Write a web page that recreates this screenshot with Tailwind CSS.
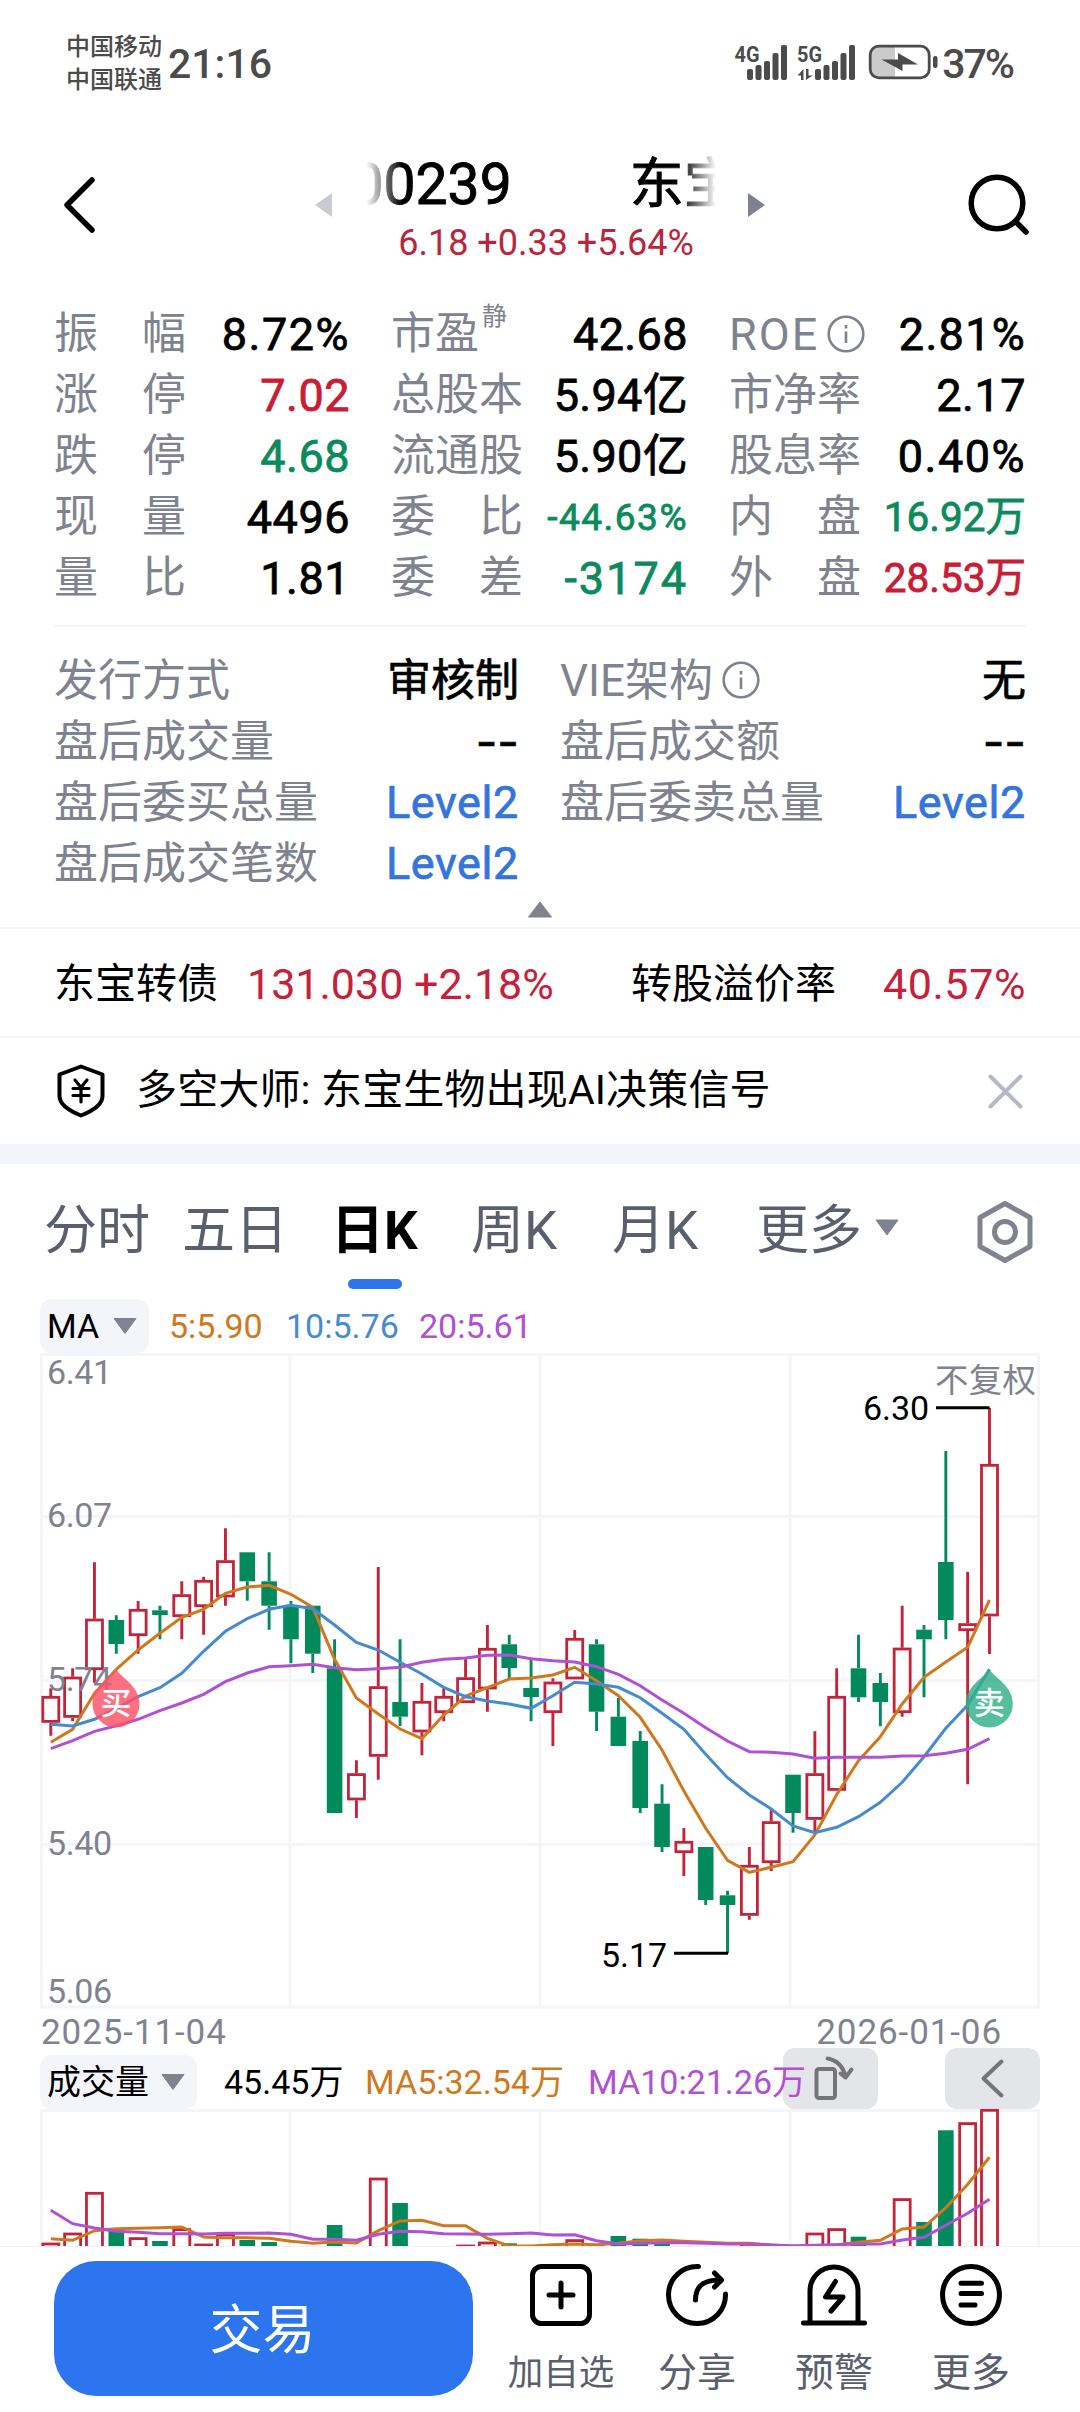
<!DOCTYPE html>
<html lang="zh-CN">
<head>
<meta charset="utf-8">
<title>东宝生物</title>
<script src="https://cdn.jsdelivr.net/npm/@tailwindcss/browser@4"></script>
</head>
<body class="w-[1080px] h-[2412px] overflow-hidden bg-white text-black font-['Roboto','Noto_Sans_CJK_SC',sans-serif] flex flex-col">

<!-- status bar -->
<header class="h-[130px] shrink-0 flex items-start justify-between pl-[66px] pr-[67px] text-[#4b4b4b] font-medium whitespace-nowrap">
  <div class="flex">
    <div class="pt-[31px] text-[24px] leading-[33px] w-[102px]"><div>中国移动</div><div>中国联通</div></div>
    <div class="pt-[44px] text-[41px] leading-[41px]">21:16</div>
  </div>
  <div class="flex pt-[40px]">
    <svg class="w-[208px] h-[46px]" viewBox="732 40 208 46" fill="#4b4b4b">
      <text x="734.5" y="62" font-size="22" font-weight="700" textLength="25" lengthAdjust="spacingAndGlyphs">4G</text>
      <rect x="747" y="69" width="6" height="11" rx="2"/><rect x="755.500" y="65" width="6" height="15" rx="2"/><rect x="764" y="61" width="6" height="19" rx="2"/><rect x="772.500" y="53" width="6" height="27" rx="2"/><rect x="781" y="45" width="6" height="35" rx="2"/>
      <text x="797" y="62" font-size="22" font-weight="700" textLength="25" lengthAdjust="spacingAndGlyphs">5G</text>
      <path d="M797.500 75.500L803.500 69V80H801V75.500ZM806 69V80L812.500 75.500H808.500V69Z"/>
      <rect x="815" y="69" width="6" height="11" rx="2"/><rect x="823.500" y="65" width="6" height="15" rx="2"/><rect x="832" y="61" width="6" height="19" rx="2"/><rect x="840.500" y="53" width="6" height="27" rx="2"/><rect x="849" y="45" width="6" height="35" rx="2"/>
      <path d="M895 46H879Q870 46 870 55V69Q870 78 879 78H895Z" fill="#cbcbcb"/>
      <rect x="870.200" y="46.200" width="59" height="31.600" rx="8.500" fill="none" stroke="#4b4b4b" stroke-width="2.800"/>
      <path d="M898 53L918 64.500H902.500V71L881.500 59.500H898Z"/><rect x="933" y="56" width="4.500" height="12" rx="2.200"/>
    </svg>
    <div class="pt-[4px] pl-[2px] text-[41px] leading-[41px] tracking-[-2px]">37%</div>
  </div>
</header>

<!-- title bar -->
<section class="h-[172px] shrink-0 flex px-[54px]">
  <svg class="w-[60px] h-[140px]" viewBox="54 130 60 140" fill="none" stroke="#000" stroke-width="5.500" stroke-linecap="round" stroke-linejoin="round"><path d="M92 180L67 205L92 230"/></svg>
  <div class="flex ml-[197px]">
    <svg class="w-[26px] h-[140px]" viewBox="311 130 26 140"><path d="M315 205L332 193V217Z" fill="#c9cbd3"/></svg>
    <div class="w-[407px] flex flex-col items-center whitespace-nowrap">
      <div class="relative h-[92px] w-[350px] overflow-hidden text-[57px] leading-[57px] pt-[26px] flex [-webkit-text-stroke:0.9px]">
        <span class="-ml-[14px]">00239</span>
        <span class="ml-[118px] text-[54px]">东宝</span>
        <span class="absolute left-0 top-0 w-[36px] h-[92px] bg-linear-to-r from-white to-white/0"></span>
        <span class="absolute right-0 top-0 w-[36px] h-[92px] bg-linear-to-l from-white to-white/0"></span>
      </div>
      <div class="text-[36px] leading-[44px] -mt-px text-[#b9253c] pl-[11px]">6.18 +0.33 +5.64%</div>
    </div>
    <svg class="w-[26px] h-[140px]" viewBox="744 130 26 140"><path d="M765 205L748 193V217Z" fill="#7d8190"/></svg>
  </div>
  <svg class="w-[70px] h-[140px] ml-auto" viewBox="956 130 70 140" fill="none" stroke="#000" stroke-width="5.500" stroke-linecap="round" overflow="visible"><circle cx="997" cy="203" r="25.800"/><path d="M1016 222L1026 232"/></svg>
</section>

<!-- key figures -->
<section class="shrink-0 h-[325px] px-[54px]">
  <div class="h-full pt-[2px] grid grid-cols-[296px_297px_297px] grid-rows-[repeat(5,61px)] gap-x-[41px] border-b-[2px] border-[#f5f5f9] text-[45px] leading-[61px] whitespace-nowrap [&>div>span:last-child]:[-webkit-text-stroke:0.8px]">
    <div class="flex justify-between"><span class="w-[132px] flex justify-between text-[44px] text-[#7f838f]"><i class="not-italic">振</i><i class="not-italic">幅</i></span><span class="tracking-[1.5px]">8.72%</span></div>
    <div class="flex justify-between"><span class="text-[44px] text-[#7f838f] flex">市盈<span class="text-[25px] leading-[26px] pl-[3px]">静</span></span><span class="tracking-[0.4px]">42.68</span></div>
    <div class="flex justify-between"><span class="text-[45px] text-[#7f838f] flex items-center tracking-[2px]">ROE<svg class="w-[40px] h-[40px] ml-[7px] -mt-[2px]" viewBox="0 0 40 40" fill="none" stroke="#7f838f" stroke-width="2.600"><circle cx="20" cy="20" r="17.300"/><path d="M20 17.500V29M20 11V14.500"/></svg></span><span class="tracking-[1.3px]">2.81%</span></div>

    <div class="flex justify-between"><span class="w-[132px] flex justify-between text-[44px] text-[#7f838f]"><i class="not-italic">涨</i><i class="not-italic">停</i></span><span class="text-[#c91c35] tracking-[0.5px]">7.02</span></div>
    <div class="flex justify-between"><span class="text-[44px] text-[#7f838f]">总股本</span><span class="tracking-[0.3px]">5.94亿</span></div>
    <div class="flex justify-between"><span class="text-[44px] text-[#7f838f]">市净率</span><span class="tracking-[0.5px]">2.17</span></div>

    <div class="flex justify-between"><span class="w-[132px] flex justify-between text-[44px] text-[#7f838f]"><i class="not-italic">跌</i><i class="not-italic">停</i></span><span class="text-[#0b8a5c] tracking-[0.5px]">4.68</span></div>
    <div class="flex justify-between"><span class="text-[44px] text-[#7f838f]">流通股</span><span class="tracking-[0.3px]">5.90亿</span></div>
    <div class="flex justify-between"><span class="text-[44px] text-[#7f838f]">股息率</span><span class="tracking-[1.5px]">0.40%</span></div>

    <div class="flex justify-between"><span class="w-[132px] flex justify-between text-[44px] text-[#7f838f]"><i class="not-italic">现</i><i class="not-italic">量</i></span><span class="tracking-[0.5px]">4496</span></div>
    <div class="flex justify-between"><span class="w-[132px] flex justify-between text-[44px] text-[#7f838f]"><i class="not-italic">委</i><i class="not-italic">比</i></span><span class="text-[37px] text-[#0b8a5c] tracking-[1.5px]">-44.63%</span></div>
    <div class="flex justify-between"><span class="w-[132px] flex justify-between text-[44px] text-[#7f838f]"><i class="not-italic">内</i><i class="not-italic">盘</i></span><span class="text-[40.500px] text-[#0b8a5c]">16.92万</span></div>

    <div class="flex justify-between"><span class="w-[132px] flex justify-between text-[44px] text-[#7f838f]"><i class="not-italic">量</i><i class="not-italic">比</i></span><span class="tracking-[0.5px]">1.81</span></div>
    <div class="flex justify-between"><span class="w-[132px] flex justify-between text-[44px] text-[#7f838f]"><i class="not-italic">委</i><i class="not-italic">差</i></span><span class="text-[#0b8a5c] tracking-[2px]">-3174</span></div>
    <div class="flex justify-between"><span class="w-[132px] flex justify-between text-[44px] text-[#7f838f]"><i class="not-italic">外</i><i class="not-italic">盘</i></span><span class="text-[40.500px] text-[#c91c35]">28.53万</span></div>
  </div>
</section>

<!-- after-hours figures -->
<section class="shrink-0 h-[302px] border-b-[2px] border-[#f5f5f9] px-[54px] pt-[24px] flex flex-col items-center">
  <div class="w-full grid grid-cols-[465px_466px] grid-rows-[repeat(4,61px)] gap-x-[41px] text-[44px] leading-[61px] whitespace-nowrap text-[#7f838f] [&>div>span:last-child]:[-webkit-text-stroke:0.7px]">
    <div class="flex justify-between"><span>发行方式</span><span class="text-black">审核制</span></div>
    <div class="flex justify-between"><span class="flex items-center">VIE架构<svg class="w-[40px] h-[40px] ml-[8px] -mt-[3px]" viewBox="0 0 40 40" fill="none" stroke="#7f838f" stroke-width="2.600"><circle cx="20" cy="20" r="17.300"/><path d="M20 17.500V29M20 11V14.500"/></svg></span><span class="text-black">无</span></div>
    <div class="flex justify-between"><span>盘后成交量</span><span class="text-[47px] leading-[59px] text-black font-['Inter']">--</span></div>
    <div class="flex justify-between"><span>盘后成交额</span><span class="text-[47px] leading-[59px] text-black font-['Inter']">--</span></div>
    <div class="flex justify-between"><span>盘后委买总量</span><span class="text-[45px] leading-[59px] tracking-[0.6px] text-[#3375dd]">Level2</span></div>
    <div class="flex justify-between"><span>盘后委卖总量</span><span class="text-[45px] leading-[59px] tracking-[0.6px] text-[#3375dd]">Level2</span></div>
    <div class="flex justify-between"><span>盘后成交笔数</span><span class="text-[45px] leading-[59px] tracking-[0.6px] text-[#3375dd]">Level2</span></div>
  </div>
  <svg class="w-[26px] h-[18px] mt-[6px]" viewBox="0 0 26 18"><path d="M13 1L24.500 16H1.500Z" fill="#7f838f" stroke="#7f838f" stroke-linejoin="round"/></svg>
</section>

<!-- convertible bond -->
<section class="shrink-0 h-[109px] border-b-[2px] border-[#f4f5f9] px-[54px] pt-[2px] flex items-center text-[41px] leading-[60px] whitespace-nowrap">
  <span class="w-[193px]">东宝转债</span>
  <span class="w-[384px] text-[43px] text-[#c6203a]">131.030 +2.18%</span>
  <span>转股溢价率</span>
  <span class="ml-auto text-[43px] tracking-[0.6px] text-[#c6203a]">40.57%</span>
</section>

<!-- signal notice -->
<section class="shrink-0 h-[126px] px-[54px] flex items-center border-b-[20px] border-[#f4f5fa] whitespace-nowrap">
  <svg class="w-[82px] h-[60px]" viewBox="54 1061 82 60" fill="none" stroke="#000" stroke-width="4" stroke-linejoin="round" stroke-linecap="round"><path d="M81 1066.500L102.500 1074.500V1096Q102.500 1107 81 1115.500Q59.500 1107 59.500 1096V1074.500Z"/><path stroke-width="3.200" d="M75 1080L81 1087.500L87 1080M81 1088V1102M73 1088.500H89M73 1095.500H89"/></svg>
  <span class="text-[41px] leading-[60px] tracking-[0.15px] -mt-[3px]">多空大师: 东宝生物出现AI决策信号</span>
  <svg class="w-[40px] h-[40px] ml-auto" viewBox="986 1071 40 40" stroke="#b4b9c6" stroke-width="4" stroke-linecap="round"><path d="M990.500 1076.500L1020.500 1106.500M1020.500 1076.500L990.500 1106.500"/></svg>
</section>

<!-- period tabs -->
<nav class="shrink-0 h-[133px] pt-px pl-[44px] pr-[42px] flex items-start text-[53px] leading-[132px] text-[#5a5f6e] whitespace-nowrap">
  <span class="w-[138px]">分时</span>
  <span class="w-[149px]">五日</span>
  <span class="w-[140px] font-bold text-black flex flex-col"><span class="h-[114px]">日K</span><span class="ml-[17px] w-[54px] h-[10px] rounded-full bg-[#2c75ef]"></span></span>
  <span class="w-[141px]">周K</span>
  <span class="w-[144px]">月K</span>
  <span>更多</span>
  <svg class="w-[26px] h-[130px] ml-[12px]" viewBox="0 0 26 130"><path d="M2 55H24L13 70Z" fill="#7f838f" stroke="#7f838f" stroke-linejoin="round"/></svg>
  <svg class="w-[66px] h-[130px] ml-auto" viewBox="972.5 1165 66 130" fill="none" stroke="#7f838f" stroke-width="5" stroke-linejoin="round"><path d="M1005.500 1203.500L1030.500 1217.500V1246.500L1005.500 1260.500L980.500 1246.500V1217.500Z"/><circle cx="1005.500" cy="1232" r="10.500"/></svg>
</nav>

<!-- moving-average legend -->
<section class="shrink-0 h-[56px] pt-[2px] pl-[40px] flex text-[34px] leading-[54px] whitespace-nowrap">
  <div class="w-[109px] h-[54px] rounded-[12px] bg-[#f4f5fa] flex items-center pl-[7px]">MA<svg class="w-[26px] h-[18px] ml-[13px]" viewBox="0 0 26 18"><path d="M2 1.500H24L13 16.500Z" fill="#7f838f" stroke="#7f838f" stroke-linejoin="round"/></svg></div>
  <span class="ml-[20px] w-[117px] text-[#d0781e]">5:5.90</span>
  <span class="w-[133px] text-[#468bcd]">10:5.76</span>
  <span class="text-[#b050d2]">20:5.61</span>
</section>

<!-- candlestick chart -->
<svg id="k" class="shrink-0 w-[1080px] h-[656px]" viewBox="0 1353 1080 656" fill="none"></svg>

<!-- dates -->
<section class="shrink-0 h-[39px] pl-[41px] pr-[78px] flex justify-between text-[35px] leading-[48px] tracking-[0.9px] text-[#7f838f] whitespace-nowrap"><span>2025-11-04</span><span>2026-01-06</span></section>

<!-- volume legend -->
<section class="relative shrink-0 h-[61px] pt-[7px] pl-[40px] flex text-[34px] leading-[54px] whitespace-nowrap">
  <div class="w-[157px] h-[54px] rounded-[12px] bg-[#f4f5fa] flex items-center pl-[7px]">成交量<svg class="w-[26px] h-[18px] ml-[11px]" viewBox="0 0 26 18"><path d="M2 1.500H24L13 16.500Z" fill="#7f838f" stroke="#7f838f" stroke-linejoin="round"/></svg></div>
  <div class="absolute left-[783px] top-0 w-[95px] h-[61px] rounded-[12px] bg-[#e4e5e9]"><svg class="w-[95px] h-[61px]" viewBox="783 2048 95 61" fill="none" stroke="#757575" stroke-width="4" stroke-linecap="round" stroke-linejoin="round"><rect x="816.500" y="2069" width="18.500" height="29" rx="2.500"/><path d="M827.500 2058.500Q842 2061 845.500 2077M840.500 2073.500L845.500 2077.500L851.500 2069.500"/></svg></div>
  <div class="absolute left-[945px] top-0 w-[95px] h-[61px] rounded-[12px] bg-[#e4e5e9]"><svg class="w-[95px] h-[61px]" viewBox="945 2048 95 61" fill="none" stroke="#757575" stroke-width="4" stroke-linecap="round" stroke-linejoin="round"><path d="M1001.500 2061.500L983.500 2078.500L1001.500 2095.500"/></svg></div>
  <span class="relative ml-[27px] w-[141px]">45.45万</span>
  <span class="relative w-[223px] text-[#d0781e]">MA5:32.54万</span>
  <span class="relative text-[#b050d2]">MA10:21.26万</span>
</section>

<!-- volume chart -->
<svg id="v" class="shrink-0 w-[1080px] h-[137px]" viewBox="0 2109 1080 137" fill="none"></svg>

<!-- action bar -->
<footer class="shrink-0 h-[166px] border-t border-[#eeeff3] pl-[54px] flex items-start text-[39px] text-[#5a5f6e] whitespace-nowrap">
  <button class="mt-[14px] w-[419px] h-[135px] rounded-[42px] bg-[#2c75ef] text-white text-[53px] leading-[133px] pt-[4px] pr-[2px] flex justify-center">交易</button>
  <div class="w-[136px] ml-[20px] flex flex-col items-center pt-[14px]"><svg class="w-[68px] h-[68px]" viewBox="527 2261 68 68" fill="none" stroke="#000" stroke-width="5" stroke-linecap="round"><rect x="532.500" y="2266.500" width="57" height="57" rx="9"/><path d="M561 2283V2307M549 2295H573"/></svg><span class="mt-[15px] text-[35.500px] leading-[58px]">加自选</span></div>
  <div class="w-[136px] flex flex-col items-center pt-[14px]"><svg class="w-[68px] h-[68px]" viewBox="663 2261 68 68" fill="none" stroke="#000" stroke-width="5" stroke-linecap="round" stroke-linejoin="round"><path d="M698.500 2266.500A28.500 28.500 0 1 0 725.500 2294M695.500 2300C695.500 2286 703 2280 720 2280M714.500 2273L721.500 2280L714.500 2287"/></svg><span class="mt-[15px] leading-[58px]">分享</span></div>
  <div class="w-[138px] flex flex-col items-center pt-[14px]"><svg class="w-[68px] h-[68px]" viewBox="800 2261 68 68" fill="none" stroke="#000" stroke-width="5" stroke-linecap="round" stroke-linejoin="round"><path d="M810 2322V2291A24 24 0 0 1 858 2291V2322M803.500 2323H864.500M835.500 2281.500L825.500 2297H843L831 2311"/></svg><span class="mt-[15px] leading-[58px]">预警</span></div>
  <div class="w-[136px] flex flex-col items-center pt-[14px]"><svg class="w-[68px] h-[68px]" viewBox="937 2261 68 68" fill="none" stroke="#000" stroke-width="5" stroke-linecap="round"><circle cx="971" cy="2295" r="28.500"/><path d="M961 2283.200H981.500M961 2293.500H981.500M961 2305H975"/></svg><span class="mt-[15px] leading-[58px]">更多</span></div>
</footer>

<script>
const RED = '#c3243b', GREEN = '#028a5d', GRID = '#f4f5fa';
const X = i => 50.8 + 21.83 * i;
// up/down flag, high, body top, body bottom, low
const candles = [
 ['r',1688.3,1696,1722.7,1735.7],['r',1668.3,1676.7,1717.7,1721],['r',1562.3,1618.7,1670,1682.7],['g',1615.3,1620,1644,1653.7],['r',1601,1609,1636,1653.7],['g',1605.7,1610.3,1615,1639.3],['r',1581.3,1594.3,1617,1639.3],['r',1576.7,1580,1607,1634.7],['r',1528.3,1560.3,1597.3,1605.7],['g',1552.3,1552.3,1581.3,1600.7],['g',1552.3,1581.3,1605.7,1629.7],['g',1601,1605.7,1639.3,1663.3],['g',1605.7,1605.7,1653.7,1673],['g',1639.3,1668.3,1813,1813],['r',1760.3,1773.3,1800.3,1818],['r',1567,1686.3,1756.7,1779.7],
 ['g',1639.3,1702,1716.7,1726],['r',1683,1701,1732.3,1755.3],['r',1688.3,1696,1713,1721.3],['r',1658.3,1677.3,1703,1703],['r',1625,1648,1689.3,1711.7],['g',1634.7,1644.3,1668,1678.3],['g',1660,1688,1697,1721.3],['r',1678.3,1681.7,1713,1746],['r',1630,1638,1679.3,1679.3],['g',1639.3,1644.3,1711.7,1731],['g',1698,1716.7,1746,1746],['g',1731,1741,1808,1813],['g',1784.3,1803.7,1847,1852],['r',1828,1841,1853,1876],['g',1847,1847,1900,1905],['g',1890.7,1895.3,1905,1953.3],
 ['r',1847,1865,1915.7,1919.7],['r',1808.3,1821.3,1863,1871],['g',1774.7,1774.7,1813,1832.7],['r',1731.3,1773.3,1819.7,1832.7],['r',1668.3,1696,1790.7,1790.7],['g',1634.7,1668.3,1697.3,1702],['g',1673,1683,1702,1726.3],['r',1605.7,1647.7,1713,1716.7],['g',1625,1629.7,1639.3,1697.3],['g',1451,1562,1620,1639.3],['r',1571.7,1623.3,1631,1784.3],['r',1407.7,1464,1616.3,1654]];
const ma5 = [1742.3,1729.3,1693.3,1669.3,1650,1633.3,1617.3,1609.3,1593.3,1587,1585.3,1594.3,1607.3,1659.3,1698,1714,1729,1738.7,1715,1696,1687.7,1679,1678,1675,1667.3,1680.7,1695.7,1717.3,1750,1791,1828.3,1860.3,1872.3,1867.3,1861.7,1835,1794.5,1760.7,1736.7,1704,1677.3,1662,1647.3,1600];
const ma10 = [1724.3,1726,1719.3,1708.3,1696.7,1687.7,1673.3,1651.3,1631.3,1618.7,1609.3,1605.3,1608.7,1625,1642.3,1650,1662.3,1674,1687.3,1696.7,1701,1704,1708.3,1695.7,1682.3,1684,1687.3,1697.7,1713.3,1729.3,1754.3,1777.7,1795,1809,1826,1832.7,1827.3,1816.7,1802.3,1782.3,1756.7,1728.3,1705,1669.3];
const ma20 = [1748.7,1740.7,1731.3,1725.7,1719.3,1710.7,1703,1694.3,1681.7,1673,1666.7,1665.7,1664.3,1667.7,1669.7,1668.7,1667.3,1662.3,1659.3,1658,1655.3,1655,1658.7,1660.7,1662,1666.7,1674.3,1685.7,1700,1713.3,1727.7,1741,1751.7,1752.3,1754,1758.3,1757.3,1757.3,1757.3,1756,1755.7,1753.3,1749.3,1738.7];
const line = (a, c) => `<polyline points="${a.map((y, i) => X(i).toFixed(1) + ',' + y).join(' ')}" stroke="${c}" stroke-width="3"/>`;
const label = (x, y, w, t, c) => `<text x="${x}" y="${y}" textLength="${w}" font-size="34" fill="${c}">${t}</text>`;
const box = (x, t, b, up) => up
  ? `<rect x="${x - 8}" y="${t + 1.3}" width="16" height="${Math.max(b - t - 2.6, 1)}" fill="#fff" stroke="${RED}" stroke-width="2.8"/>`
  : `<rect x="${x - 7.8}" y="${t}" width="15.6" height="${b - t}" fill="${GREEN}"/>`;
let s = `<path d="M40 1354.500H1040M40 1516.600H1040M40 1680.500H1040M40 1844.300H1040M40 2007H1040M41.500 1353V2008M290 1353V2008M540 1353V2008M790 1353V2008M1038.500 1353V2008" stroke="${GRID}" stroke-width="3"/>`;
s += `<text x="935" y="1392" textLength="101" font-size="33.5" fill="#7f838f">不复权</text>`;
candles.forEach(([k, h, t, b, l], i) => {
  const x = X(i);
  s += `<path d="M${x} ${h}V${t}M${x} ${b}V${l}" stroke="${k === 'r' ? RED : GREEN}" stroke-width="2.9"/>` + box(x, t, b, k === 'r');
});
s += line(ma5, '#d0781e') + line(ma10, '#468bcd') + line(ma20, '#b050d2');
s += label(47, 1384.3, 65, '6.41', '#7f838f') + label(47, 1526.5, 65, '6.07', '#7f838f') + label(47, 1690.5, 65, '5.74', '#7f838f') + label(47, 1854.5, 65, '5.40', '#7f838f') + label(47, 2002.5, 65, '5.06', '#7f838f');
s += label(863, 1420.3, 66, '6.30', '#000') + label(601, 1966.5, 66, '5.17', '#000');
s += '<path d="M936 1407.700H989.500M674 1953.300H728" stroke="#000" stroke-width="3"/>';
[[116, '买', '#ff5068'], [989.3, '卖', '#30b088']].forEach(([x, t, c]) => {
  s += `<path d="M${x} 1669.500C${x + 6} 1678 ${x + 23.500} 1686 ${x + 23.500} 1704A23.500 23.500 0 0 1 ${x - 23.500} 1704C${x - 23.500} 1686 ${x - 6} 1678 ${x} 1669.500Z" fill="${c}" fill-opacity=".82"/><text x="${x}" y="1714" text-anchor="middle" font-size="31" font-weight="500" fill="#fff">${t}</text>`;
});
document.getElementById('k').innerHTML = s;

// candle index, flag, bar top
const vol = [[0,'r',2242.7],[1,'r',2232.7],[2,'r',2192],[3,'g',2230.7],[4,'r',2237.3],[5,'g',2241],[6,'r',2228.3],[7,'r',2243.7],[8,'r',2233.3],[9,'g',2240],[10,'g',2242],[13,'g',2225],[15,'r',2177.7],[16,'g',2203],[19,'r',2244.7],[20,'r',2241.7],[21,'g',2243.3],[24,'r',2239.3],[25,'g',2244.7],[26,'g',2236],[27,'g',2238.7],[28,'g',2244],[32,'r',2243],[35,'r',2232.7],[36,'r',2228.3],[37,'g',2236.7],[39,'r',2198.3],[40,'g',2222],[41,'g',2130.3],[42,'r',2122.3],[43,'r',2109]];
const v5 = [746,751,722,716,715,713,711,741,743,743,745,754,760,756,759,722,693,691,707,707,745,768,768,764,762,764,760,752,750,754,757,760,760,765,768,768,764,757,751,717,711,653,583,502];
const v10 = [661,701,714,724,727,731,731,732,730,730,729,733,748,748,751,733,724,725,731,732,733,731,729,735,734,752,762,760,758,758,760,762,762,765,768,766,764,762,762,750,742,706,670,628];
let q = `<path d="M40 2110.500H1040M41.500 2109V2250M290 2109V2250M540 2109V2250M790 2109V2250M1038.500 2109V2250" stroke="${GRID}" stroke-width="3"/>`;
vol.forEach(([i, k, t]) => q += box(X(i), t, 2260, k === 'r'));
q += line(v5.map(n => (1990 + n / 3).toFixed(1)), '#d0781e') + line(v10.map(n => (1990 + n / 3).toFixed(1)), '#b050d2');
document.getElementById('v').innerHTML = q;
</script>
</body>
</html>
